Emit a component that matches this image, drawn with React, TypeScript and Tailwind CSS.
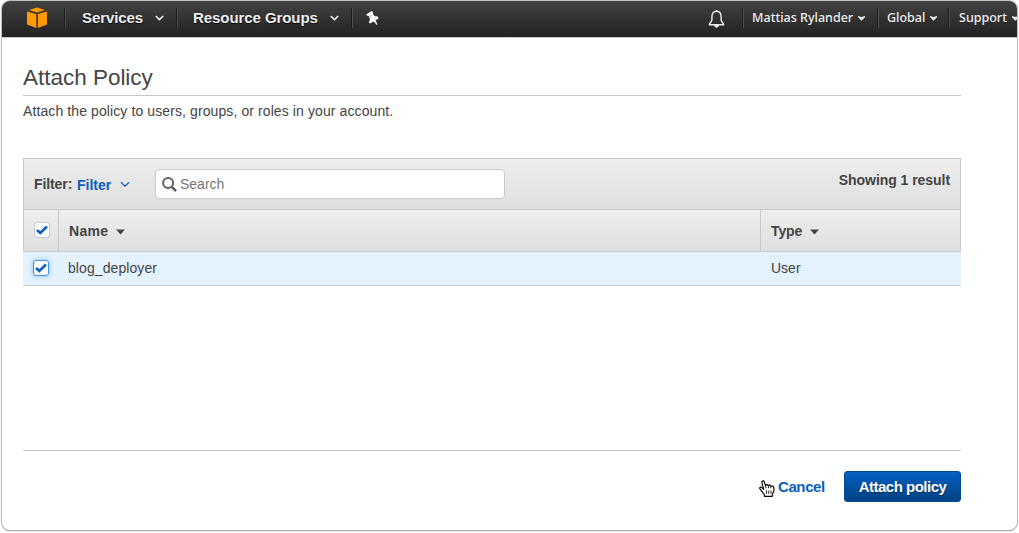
import React from "react";

function Divider() {
  return <span className="h-5 w-0.5 shrink-0 border-l border-r border-l-[#1b1b1b] border-r-[#505050]" />;
}

function Logo() {
  return (
    <svg className="ml-[25px] h-[22px] w-5 shrink-0" viewBox="0 0 20 22" fill="#ff9900">
      <path d="M10 .5 18 3 10 5.5 2 3Z" />
      <path d="M0 4.4 9.3 7V21L0 17.6Z" />
      <path d="M20 4.4 10.9 7V21L20 17.6Z" />
    </svg>
  );
}

function NavChevron({ className }: { className: string }) {
  return (
    <svg className={`h-1.5 w-[9px] shrink-0 ${className}`} viewBox="0 0 9 6" fill="none" stroke="#eee" strokeWidth="1.7">
      <path d="M.8 1 4.5 4.5 8.2 1" />
    </svg>
  );
}

function Pin() {
  return (
    <svg className="ml-[13px] h-[15px] w-[13px] shrink-0" viewBox="0 0 13 15" fill="#f8f8f8">
      <path d="M.3 3.2 5.8 0 7.2 1.2 6.9 3 8.9 5.2 11.6 5.2 12.6 7.4 9.6 9.2 11.5 13.6 10.7 14 7.9 10.4 3.8 12.6 2.9 11 4 8.6 2.7 5.1.9 4.8Z" />
      <path d="M4.1 4.3 5.3 6.8" stroke="#aaa" strokeWidth=".8" />
    </svg>
  );
}

function Bell() {
  return (
    <svg className="mt-px h-[18px] w-[17px] shrink-0" viewBox="0 0 17 18" fill="none" stroke="#eee" strokeWidth="1.4" strokeLinejoin="round">
      <path d="M8.5 1.3C5.3 1.3 3.9 3.6 3.9 7v2.8C3.9 11.8 1.3 13 1.3 14.8h14.4c0-1.8-2.6-3-2.6-5V7c0-3.4-1.4-5.7-4.6-5.7Z" />
      <path d="M6.8 15.2c0 2.3 3.4 2.3 3.4 0Z" fill="#eee" />
      <path d="M8.5 0v1.5" />
    </svg>
  );
}

function MenuArrow({ className }: { className: string }) {
  return (
    <svg className={`h-[5px] w-[7px] shrink-0 ${className}`} viewBox="0 0 7 5" fill="#eee">
      <path d="M0 0 3.5 1 7 0 7 1.3 3.5 4.7 0 1.3Z" />
    </svg>
  );
}

function SortArrow() {
  return (
    <svg className="mt-[3px] ml-2 h-1.5 w-[9px] shrink-0" viewBox="0 0 9 6" fill="#444">
      <path d="M0 .5h9L4.5 5.5Z" />
    </svg>
  );
}

function CheckBox({ focused = false }: { focused?: boolean }) {
  return (
    <span
      className={`flex size-4 items-center justify-center rounded-[3px] border bg-white ${
        focused ? "border-[#3f8fe0] shadow-[0_0_5px_1px_#a5cffa]" : "border-[#c8c8c8]"
      }`}
    >
      <svg className="h-[10px] w-3" viewBox="0 0 12 10" fill="none" stroke="#0a62c4" strokeWidth="2.7">
        <path d="M1 5.1 4.3 8 11 1.6" />
      </svg>
    </span>
  );
}

function HandCursor() {
  return (
    <svg className="mt-1 h-[17px] w-4 shrink-0" viewBox="0 0 16 17" fill="#fff" stroke="#000" strokeWidth="1.15" strokeLinejoin="round">
      <path d="M5.4 16.3V14.6L3.6 12.4 1 8.8C.1 7.3 1.7 6.6 2.8 7.6L4.7 9.4 2.9 2.6C2.5.8 4.7.3 5.2 1.8L6.5 5.6C6.8 4.2 8.9 4.2 9.2 5.7 10 4.6 11.6 5 11.9 6.4 13 5.5 14.8 6.2 14.9 7.7V11L13.3 14.4V16.3Z" />
      <path d="M7.5 10.5v3.3M9.8 10.5v3.3M12 10.5v3.3M6.5 5.6l.6 2.7M9.2 5.7l.3 2.5M11.9 6.4v2" strokeWidth=".85" />
    </svg>
  );
}

function TopBar() {
  return (
    <header className="flex h-9 items-center overflow-hidden bg-linear-to-b from-[#424242] to-[#222] pb-0.5 whitespace-nowrap text-[#eee]">
      <Logo />
      <span className="w-[17px] shrink-0" />
      <Divider />
      <span className="ml-4 w-[62px] shrink-0 text-[15px] font-bold tracking-[-0.1px] [text-shadow:0_1px_1px_#000]">Services</span>
      <NavChevron className="ml-[11px]" />
      <span className="w-3 shrink-0" />
      <Divider />
      <span className="ml-[15px] w-[126px] shrink-0 text-[15px] font-bold tracking-[-0.07px] [text-shadow:0_1px_1px_#000]">Resource Groups</span>
      <NavChevron className="ml-[11px]" />
      <span className="w-3 shrink-0" />
      <Divider />
      <Pin />
      <span className="flex-1" />
      <div className="flex w-[309px] shrink-0 items-center font-['Noto_Sans',sans-serif] text-[12.5px] font-medium">
        <Bell />
        <span className="w-[17px] shrink-0" />
        <Divider />
        <span className="ml-2 w-[102px] shrink-0">Mattias Rylander</span>
        <MenuArrow className="ml-1" />
        <span className="w-3 shrink-0" />
        <Divider />
        <span className="ml-2 w-[39px] shrink-0">Global</span>
        <MenuArrow className="ml-[4px]" />
        <span className="w-[11px] shrink-0" />
        <Divider />
        <span className="ml-[9px] w-[50px] shrink-0">Support</span>
        <MenuArrow className="ml-[3px]" />
      </div>
    </header>
  );
}

function EntityTable() {
  return (
    <section className="mt-[37px] h-32 text-[14px] leading-5 whitespace-nowrap">
      <div className="border border-[#c8c8c8]">
        <div className="flex h-[50px] items-center bg-linear-to-b from-[#eee] to-[#dfdfdf] pr-2.5 pl-2.5">
          <span className="w-[43px] font-bold tracking-[-0.1px]">Filter:</span>
          <button className="flex w-[78px] items-center pt-px font-bold text-[#0b5fc0]">
            <span className="w-[43px] text-left">Filter</span>
            <svg className="h-[7px] w-[10px]" viewBox="0 0 10 7" fill="none" stroke="#0b5fc0" strokeWidth="1.3">
              <path d="M1 1.2 5 5.2 9 1.2" />
            </svg>
          </button>
          <div className="flex h-[30px] w-[350px] items-center rounded-[4px] border border-[#c8c8c8] bg-white pl-1.5 text-[#757575]">
            <svg className="mr-[3px] h-[15px] w-[15px]" viewBox="0 0 15 15" fill="none" stroke="#606060" strokeWidth="2">
              <circle cx="6.1" cy="6.1" r="5" />
              <path d="m9.8 9.8 4.2 4.2" strokeWidth="2.5" />
            </svg>
            <span>Search</span>
          </div>
          <span className="mb-2 ml-auto font-bold tracking-[-0.05px]">Showing 1 result</span>
        </div>
        <div className="grid h-[42px] grid-cols-[35px_702px_1fr] border-t border-[#c8c8c8] bg-linear-to-b from-[#eee] to-[#dfdfdf] font-bold">
          <div className="flex items-center border-r border-[#c8c8c8] pb-0.5 pl-2.5"><CheckBox /></div>
          <div className="flex items-center border-r border-[#c8c8c8] pl-2.5 tracking-[0.3px]">Name<SortArrow /></div>
          <div className="flex items-center pl-2.5 tracking-[-0.1px]">Type<SortArrow /></div>
        </div>
      </div>
      <div className="-mt-px grid h-[35px] grid-cols-[45px_703px_1fr] items-center border-t border-b border-[#c8c8c8] bg-[#e4f2fe] pb-px">
        <div className="pl-2.5"><CheckBox focused /></div>
        <span className="tracking-[0.08px]">blog_deployer</span>
        <span>User</span>
      </div>
    </section>
  );
}

export default function App() {
  return (
    <div className="h-[533px] w-[1019px] bg-white pt-px pl-0.5 font-['Liberation_Sans',Arial,sans-serif] text-[#444]">
      <div className="h-[529px] w-[1015px] overflow-hidden rounded-[8px] bg-white shadow-[0_0_1px_1px_#b8b8b8,0_1px_1px_#666]">
        <TopBar />
        <main className="flex h-[493px] flex-col border-t border-[#c8c8c8] pr-14 pl-[21px]">
          <h1 className="mt-[25px] h-[33px] border-b border-[#c8c8c8] text-[22.5px] leading-[29px] tracking-[-0.02px]">Attach Policy</h1>
          <p className="mt-[5px] h-5 text-[14px] leading-5 tracking-[0.1px] whitespace-nowrap">Attach the policy to users, groups, or roles in your account.</p>
          <EntityTable />
          <footer className="mt-[164px] flex items-start justify-end border-t border-[#c8c8c8] pt-5 text-[15px] font-bold">
            <div className="flex h-[31px] items-center">
              <HandCursor />
              <button className="ml-[3px] w-[66px] pt-px text-left tracking-[-0.4px] text-[#0b5fc0]">Cancel</button>
            </div>
            <button className="h-[31px] w-[117px] rounded-[3px] border border-[#004a95] bg-linear-to-b from-[#0760c3] to-[#004283] pt-px tracking-[-0.5px] whitespace-nowrap text-white [text-shadow:0_1px_1px_#002b59]">Attach policy</button>
          </footer>
        </main>
      </div>
    </div>
  );
}
